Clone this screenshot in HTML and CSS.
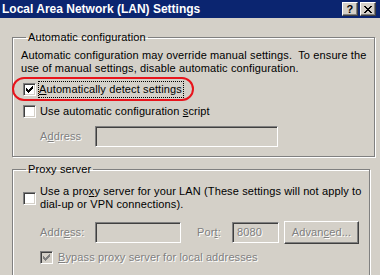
FILE: index.html
```html
<!DOCTYPE html>
<html>
<head>
<meta charset="utf-8">
<link rel="stylesheet" href="styles.css">
</head>
<body>
<div class="window">
  <div class="titlebar">
    <span class="title">Local Area Network (LAN) Settings</span>
    <div class="tbtns">
      <span class="tbtn help">?</span>
      <span class="tbtn close"><svg width="8" height="7" viewBox="0 0 8 7" shape-rendering="crispEdges"><path d="M0 0h2v1h-2zM6 0h2v1h-2zM1 1h2v1h-2zM5 1h2v1h-2zM2 2h4v1h-4zM3 3h2v1h-2zM2 4h4v1h-4zM1 5h2v1h-2zM5 5h2v1h-2zM0 6h2v1h-2zM6 6h2v1h-2z" fill="#000"/></svg></span>
    </div>
  </div>
  <div class="content">
    <fieldset class="group g1">
      <legend>Automatic configuration</legend>
      <p class="desc">Automatic configuration may override manual settings.&nbsp; To ensure the<br>use of manual settings, disable automatic configuration.</p>
      <div class="row r1">
        <span class="cb"><svg width="7" height="7" viewBox="0 0 7 7" shape-rendering="crispEdges"><path d="M0 2h1v3h-1zM1 3h1v3h-1zM2 4h1v3h-1zM3 3h1v3h-1zM4 2h1v3h-1zM5 1h1v3h-1zM6 0h1v3h-1z" fill="#000"/></svg></span>
        <span class="lbl focus"><u>A</u>utomatically detect settings</span>
        <span class="oval"></span>
      </div>
      <div class="row r2">
        <span class="cb"></span>
        <span class="lbl">Use automatic configuration <u>s</u>cript</span>
      </div>
      <div class="field-row fr1">
        <span class="dis flabel">A<u>d</u>dress</span>
        <span class="tb tb-auto"></span>
      </div>
    </fieldset>
    <fieldset class="group g2">
      <legend>Proxy server</legend>
      <div class="row r3">
        <span class="cb"></span>
        <span class="lbl">Use a pro<u>x</u>y server for your LAN (These settings will not apply to<br>dial-up or VPN connections).</span>
      </div>
      <div class="field-row fr2">
        <span class="dis flabel">Addr<u>e</u>ss:</span>
        <span class="tb tb-proxy"></span>
        <span class="dis plabel">Por<u>t</u>:</span>
        <span class="tb tb-port"><span class="dis">8080</span></span>
        <span class="btn"><span class="dis">Advan<u>c</u>ed...</span></span>
      </div>
      <div class="row r4">
        <span class="cb cb-dis"><svg width="7" height="7" viewBox="0 0 7 7" shape-rendering="crispEdges"><path d="M0 2h1v3h-1zM1 3h1v3h-1zM2 4h1v3h-1zM3 3h1v3h-1zM4 2h1v3h-1zM5 1h1v3h-1zM6 0h1v3h-1z" fill="#808080"/></svg></span>
        <span class="dis lbl"><u>B</u>ypass proxy server for local addresses</span>
      </div>
    </fieldset>
  </div>
</div>
</body>
</html>
```

FILE: styles.css
```css
* { box-sizing: border-box; }
html, body { margin: 0; padding: 0; }
body {
  background: #d4d0c8;
  font-family: "Liberation Sans", Arial, sans-serif;
  font-size: 11px;
  line-height: 13px;
  letter-spacing: 0.12px;
  color: #000;
  width: 380px;
  height: 275px;
  overflow: hidden;
}
u { text-decoration: underline; text-underline-offset: 1px; }

.titlebar {
  height: 18px;
  background: #0b2570;
  display: flex;
  align-items: center;
  justify-content: space-between;
  padding: 0 4px 0 2px;
}
.title {
  color: #fff;
  font-weight: bold;
  font-size: 12px;
  letter-spacing: 0;
}
.tbtns { display: flex; gap: 2px; }
.tbtn {
  width: 16px;
  height: 14px;
  background: #d4d0c8;
  border: 1px solid;
  border-color: #fff #404040 #404040 #fff;
  box-shadow: inset -1px -1px 0 #808080;
  display: flex;
  align-items: center;
  justify-content: center;
  font-weight: bold;
  font-size: 11px;
  line-height: 12px;
}
.tbtn.help { padding-bottom: 1px; }

.content { padding: 0 12px; }

.group {
  margin: 0;
  border: 1px solid #808080;
  box-shadow: inset 1px 1px 0 #fff, 1px 1px 0 #fff;
  padding: 0 8px;
  width: 356px;
}
.group legend {
  padding: 0 2px;
  margin-left: 5px;
  line-height: 13px;
}
.g1 { margin-top: 13px; padding-top: 5px; padding-bottom: 9px; }
.g2 { margin-top: 6px; padding-top: 9px; height: 120px; }

.desc { margin: 0; white-space: nowrap; }

.row {
  position: relative;
  display: flex;
  align-items: center;
  padding-left: 2px;
}
.r1 { margin-top: 3px; height: 22px; }
.r2 { height: 22px; }
.r4 { padding-left: 19px; margin-top: 5px; height: 16px; }

.cb {
  flex: none;
  width: 13px;
  height: 13px;
  background: #fff;
  border: 1px solid;
  border-color: #808080 #fff #fff #808080;
  box-shadow: inset 1px 1px 0 #404040, inset -1px -1px 0 #d4d0c8;
  display: flex;
  align-items: center;
  justify-content: center;
  margin-right: 4px;
}
.cb-dis { background: #d4d0c8; }
.r4 .cb { margin-right: 5px; }

.lbl { white-space: nowrap; }
.focus {
  outline: 1px dotted #000;
  outline-offset: 0;
  padding: 1px 1px 1px 0;
  margin-left: -1px;
}
.oval {
  position: absolute;
  left: -9px;
  top: -1px;
  width: 182px;
  height: 24px;
  border: 2px solid #e8141c;
  border-radius: 12px;
  pointer-events: none;
}

.dis { color: #808080; text-shadow: 1px 1px 0 #fff; }

.field-row {
  display: flex;
  align-items: center;
  padding-left: 19px;
}
.fr1 { margin-top: 4px; height: 21px; }
.fr2 { margin-top: 10px; height: 23px; }
.flabel { width: 55px; }
.tb {
  height: 21px;
  border: 1px solid;
  border-color: #808080 #fff #fff #808080;
  box-shadow: inset 1px 1px 0 #404040, inset -1px -1px 0 #d4d0c8;
  background: #d4d0c8;
  display: flex;
  align-items: center;
  padding-left: 4px;
}
.tb-auto { width: 183px; }
.tb-proxy { width: 86px; }
.plabel { margin-left: 16px; width: 35px; }
.tb-port { width: 47px; }
.btn {
  margin-left: 5px;
  width: 75px;
  height: 23px;
  border: 1px solid;
  border-color: #fff #404040 #404040 #fff;
  box-shadow: inset -1px -1px 0 #808080;
  display: flex;
  align-items: center;
  justify-content: center;
}
```
